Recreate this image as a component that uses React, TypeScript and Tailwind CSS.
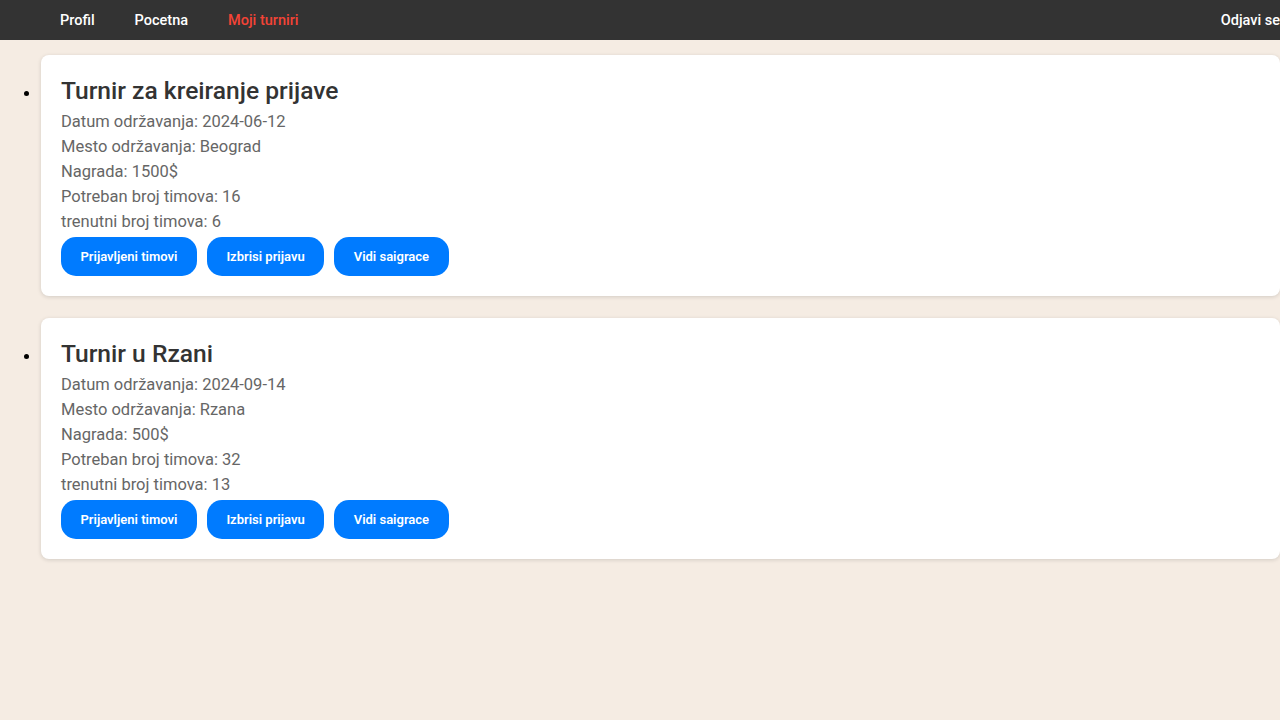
const turniri = [
  {
    naziv: 'Turnir za kreiranje prijave',
    datum: '2024-06-12',
    mesto: 'Beograd',
    nagrada: '1500$',
    potrebno: 16,
    trenutno: 6,
  },
  {
    naziv: 'Turnir u Rzani',
    datum: '2024-09-14',
    mesto: 'Rzana',
    nagrada: '500$',
    potrebno: 32,
    trenutno: 13,
  },
]

function Navbar() {
  return (
    <nav className="h-10 bg-[#333333] flex items-center pt-px overflow-hidden text-[14.5px] font-medium">
      <div className="flex items-center pl-10">
        <a className="px-5 text-white">Profil</a>
        <a className="px-5 text-white">Pocetna</a>
        <a className="px-5 text-[#f44336]">Moji turniri</a>
      </div>
      <a className="ml-auto text-white whitespace-nowrap">Odjavi se</a>
    </nav>
  )
}

export default function App() {
  return (
    <div className="min-h-screen bg-[#f5ece3] font-['Roboto',sans-serif]">
      <Navbar />
      <ul className="list-disc pl-[41px] pt-[15px] space-y-[22px]">
        {turniri.map((t) => (
          <li key={t.naziv}>
            <div className="bg-white rounded-lg shadow-[0_1px_4px_rgba(0,0,0,0.14)] p-5">
              <h2 className="text-[24.6px] leading-[31px] mb-[3px] font-medium text-[#333333]">{t.naziv}</h2>
              <div className="text-[16.5px] leading-[25px] text-[#666666]">
                <p>Datum održavanja: {t.datum}</p>
                <p>Mesto održavanja: {t.mesto}</p>
                <p>Nagrada: {t.nagrada}</p>
                <p>Potreban broj timova: {t.potrebno}</p>
                <p>trenutni broj timova: {t.trenutno}</p>
              </div>
              <div className="flex gap-[10px] mt-[3px]">
                <button className="h-[39px] px-[19.5px] rounded-[15px] bg-[#007bff] text-white text-[13px] font-semibold">
                  Prijavljeni timovi
                </button>
                <button className="h-[39px] px-[19.5px] rounded-[15px] bg-[#007bff] text-white text-[13px] font-semibold">
                  Izbrisi prijavu
                </button>
                <button className="h-[39px] px-[19.5px] rounded-[15px] bg-[#007bff] text-white text-[13px] font-semibold">
                  Vidi saigrace
                </button>
              </div>
            </div>
          </li>
        ))}
      </ul>
    </div>
  )
}
